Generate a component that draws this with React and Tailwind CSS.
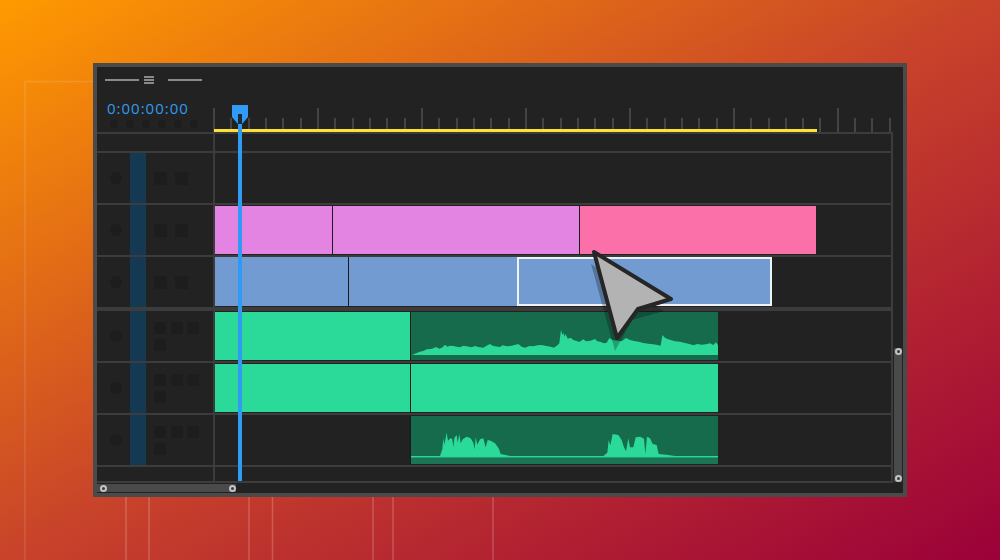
import React from 'react';

const LINE = 'border-[#3c3c3c]';

const ticks = Array.from({ length: 40 }, (_, i) => i % 6 === 0);

const waveOne =
  '36,345 48,340 60,335 72,332 80,328 92,327 100,325 108,321 118,326 128,322 135,314 142,320 150,317 160,318 170,320 180,322 190,317 200,319 215,322 225,318 235,321 250,323 258,318 270,312 278,317 285,319 300,321 308,316 320,319 335,317 355,312 365,320 375,323 388,318 400,319 412,316 425,315 440,318 452,320 462,323 472,316 478,310 483,269 487,285 490,278 494,290 497,282 503,296 512,293 520,300 530,303 538,306 550,298 558,304 568,303 578,300 585,297 592,304 600,305 612,310 620,308 628,294 634,298 640,301 652,302 665,304 678,294 690,300 702,303 716,305 730,309 745,311 760,313 772,315 782,317 787,285 793,292 800,296 812,300 825,304 840,305 855,309 868,312 880,316 892,312 905,314 918,313 930,310 940,315 948,307 954,316 954,345 36,345';

const waveTwo =
  '120,138 127,118 130,85 133,104 140,68 144,92 152,84 157,88 160,112 163,84 170,75 173,98 178,72 182,100 188,88 200,80 212,85 220,98 224,118 227,82 232,104 240,88 250,85 257,112 263,90 272,92 285,100 296,115 302,132 320,136 335,139 120,139';

const waveThree =
  '610,138 622,128 626,90 631,106 638,72 655,75 665,90 672,112 678,124 685,85 690,112 700,112 707,82 720,80 732,86 736,132 741,80 750,85 758,102 770,105 776,132 800,134 825,138 825,139 610,139';

function TrackHead({ audio }) {
  return (
    <div className="w-[116px] shrink-0 flex items-center self-stretch pl-[13px]">
      <div className="w-3 h-3 rounded-full bg-[#1d1d1d]" />
      <div className="w-4 self-stretch ml-2 bg-[#133a52]" />
      {audio ? (
        <div className="ml-2 w-[45px] grid grid-cols-3 gap-x-[5px] gap-y-[5px]">
          <div className="w-3 h-3 bg-[#1d1d1d]" />
          <div className="w-3 h-3 bg-[#1d1d1d]" />
          <div className="w-3 h-3 bg-[#1d1d1d]" />
          <div className="w-3 h-3 bg-[#1d1d1d]" />
        </div>
      ) : (
        <div className="ml-2 flex gap-2">
          <div className="w-[13px] h-[13px] bg-[#1d1d1d]" />
          <div className="w-[13px] h-[13px] bg-[#1d1d1d]" />
        </div>
      )}
    </div>
  );
}

function Track({ audio, className, clipClass, children }) {
  return (
    <div className={`flex border-t-2 ${LINE} ${className}`}>
      <TrackHead audio={audio} />
      <div className={`flex-1 flex items-start border-l-2 ${LINE} ${clipClass}`}>{children}</div>
    </div>
  );
}

function Knob() {
  return <div className="w-[7px] h-[7px] rounded-full border-2 border-[#c4c4c4] bg-[#3c3c3c]" />;
}

export default function App() {
  return (
    <div className="relative w-[1000px] h-[560px] overflow-hidden flex items-center justify-center bg-[linear-gradient(to_bottom_right,#ff9a00,#c8432a_50%,#9b0039)]">
      {/* faint guide lines behind the panel */}
      <svg className="absolute inset-0" width="1000" height="560" fill="none" stroke="#ffffff" strokeOpacity="0.2" strokeWidth="1.5">
        <path d="M25 560V81.5H93" strokeOpacity="0.12" />
        <path d="M126 497V560M149 497V560M249 497V560M272.5 497V560M373 497V560M393 497V560M493 497V560" />
      </svg>

      <div className="relative w-[814px] h-[434px] border-4 border-[#4a4a4a] bg-[#222222] flex flex-col">
        <div className="flex h-[416px]">
          <div className="w-[796px] flex flex-col">
            {/* header + ruler */}
            <div className="flex h-[65px] shrink-0">
              <div className="w-[116px] shrink-0 flex flex-col pl-2">
                <div className="flex items-center h-[8px] mt-[9px]">
                  <div className="w-[34px] h-[2px] bg-[#8a8a8a]" />
                  <div className="ml-[5px] w-[10px] flex flex-col gap-px">
                    <div className="h-[2px] bg-[#8a8a8a]" />
                    <div className="h-[2px] bg-[#8a8a8a]" />
                    <div className="h-[2px] bg-[#8a8a8a]" />
                  </div>
                  <div className="ml-[14px] w-[34px] h-[2px] bg-[#8a8a8a]" />
                </div>
                <div className="ml-[2px] mt-[14px] h-[20px] leading-[20px] text-[15px] tracking-[1px] text-[#2f9bf0] font-['Open_Sans',sans-serif]">
                  0:00:00:00
                </div>
                <div className="flex gap-2 ml-[5px] mt-[2px]">
                  <div className="w-2 h-2 rounded-full bg-[#1d1d1d]" />
                  <div className="w-2 h-2 rounded-full bg-[#1d1d1d]" />
                  <div className="w-2 h-2 rounded-full bg-[#1d1d1d]" />
                  <div className="w-2 h-2 rounded-full bg-[#1d1d1d]" />
                  <div className="w-2 h-2 rounded-full bg-[#1d1d1d]" />
                  <div className="w-2 h-2 rounded-full bg-[#1d1d1d]" />
                </div>
              </div>
              <div className="relative w-[678px] flex items-end justify-between">
                {ticks.map((major, i) => (
                  <div key={i} className={major ? 'w-[2px] h-6 bg-[#444444]' : 'w-[2px] h-[14px] bg-[#444444]'} />
                ))}
                <div className="absolute left-px bottom-0 w-[603px] h-[3px] bg-[#fde03a]" />
              </div>
            </div>

            {/* tracks */}
            <div className={`flex-1 flex flex-col border-r-2 ${LINE}`}>
              <div className={`flex h-[19px] border-t-2 ${LINE}`}>
                <div className="w-[116px] shrink-0" />
                <div className={`flex-1 border-l-2 ${LINE}`} />
              </div>

              <Track className="h-[52px]" />

              <Track className="h-[52px]" clipClass="pt-px">
                <div className="w-[117px] h-[48px] bg-[#e384e3]" />
                <div className="w-[247px] h-[48px] bg-[#e384e3] border-l border-[#1a1a1a]" />
                <div className="w-[237px] h-[48px] bg-[#fb70a9] border-l border-[#1a1a1a]" />
              </Track>

              <Track className="h-[52px]">
                <div className="w-[133px] h-[49px] bg-[#729bd1]" />
                <div className="w-[169px] h-[49px] bg-[#729bd1] border-l border-[#1a1a1a]" />
                <div className="w-[255px] h-[49px] bg-[#729bd1] border-2 border-[#eef3fa]" />
              </Track>

              <Track audio className="h-[54px] border-t-4" clipClass="pt-px">
                <div className="w-[195px] h-[48px] bg-[#2bd998]" />
                <div className="w-[308px] h-[48px] bg-[#166b4d] border-l border-[#1a1a1a]">
                  <svg className="w-full h-full" viewBox="33 216 921 144" preserveAspectRatio="none">
                    <polygon points={waveOne} fill="#2bd998" />
                  </svg>
                </div>
              </Track>

              <Track audio className="h-[52px]" clipClass="pt-px">
                <div className="w-[195px] h-[48px] bg-[#2bd998]" />
                <div className="w-[308px] h-[48px] bg-[#2bd998] border-l border-[#1a1a1a]" />
              </Track>

              <Track audio className="h-[52px]" clipClass="pt-px">
                <div className="w-[195px] h-[48px]" />
                <div className="w-[308px] h-[48px] bg-[#166b4d] border-l border-[#1a1a1a]">
                  <svg className="w-full h-full" viewBox="33 18 921 144" preserveAspectRatio="none">
                    <rect x="33" y="138" width="921" height="5" fill="#2bd998" />
                    <rect x="33" y="143" width="921" height="19" fill="#1b7455" />
                    <polygon points={waveTwo} fill="#2bd998" />
                    <polygon points={waveThree} fill="#2bd998" />
                  </svg>
                </div>
              </Track>

              <div className={`flex h-[16px] border-t-2 ${LINE}`}>
                <div className="w-[116px] shrink-0" />
                <div className={`flex-1 border-l-2 ${LINE}`} />
              </div>
              <div className={`flex-1 border-t-2 ${LINE}`} />
            </div>
          </div>

          {/* vertical scroll bar */}
          <div className="w-[10px] flex flex-col justify-end items-center">
            <div className="w-2 h-[134px] mb-[1px] bg-[#4a4a4a] flex flex-col items-center justify-between">
              <Knob />
              <Knob />
            </div>
          </div>
        </div>

        {/* horizontal scroll bar */}
        <div className="h-[10px] flex items-start">
          <div className="w-[139px] h-[8px] mt-px bg-[#4a4a4a] flex items-center justify-between pl-[3px]">
            <Knob />
            <Knob />
          </div>
        </div>

        {/* playhead */}
        <svg className="absolute left-[135px] top-[38px]" width="16" height="376" viewBox="0 0 16 376">
          <polygon points="0,0 16,0 16,12 10,19 6,19 0,12" fill="#2f9bf5" />
          <rect x="6" y="9" width="4" height="10" fill="#1f2933" />
          <rect x="6" y="19" width="4" height="357" fill="#2f9bf5" />
        </svg>
      </div>

      {/* big pointer */}
      <svg className="absolute left-[585px] top-[245px]" width="95" height="110" viewBox="585 245 95 110">
        <polygon points="591,264 664,311 632,320 615,351" fill="#000000" fillOpacity="0.25" />
        <polygon
          points="594,252 671,299 638,309 617,338"
          fill="#b3b3b3"
          stroke="#262626"
          strokeWidth="4"
          strokeLinejoin="round"
        />
      </svg>
    </div>
  );
}
